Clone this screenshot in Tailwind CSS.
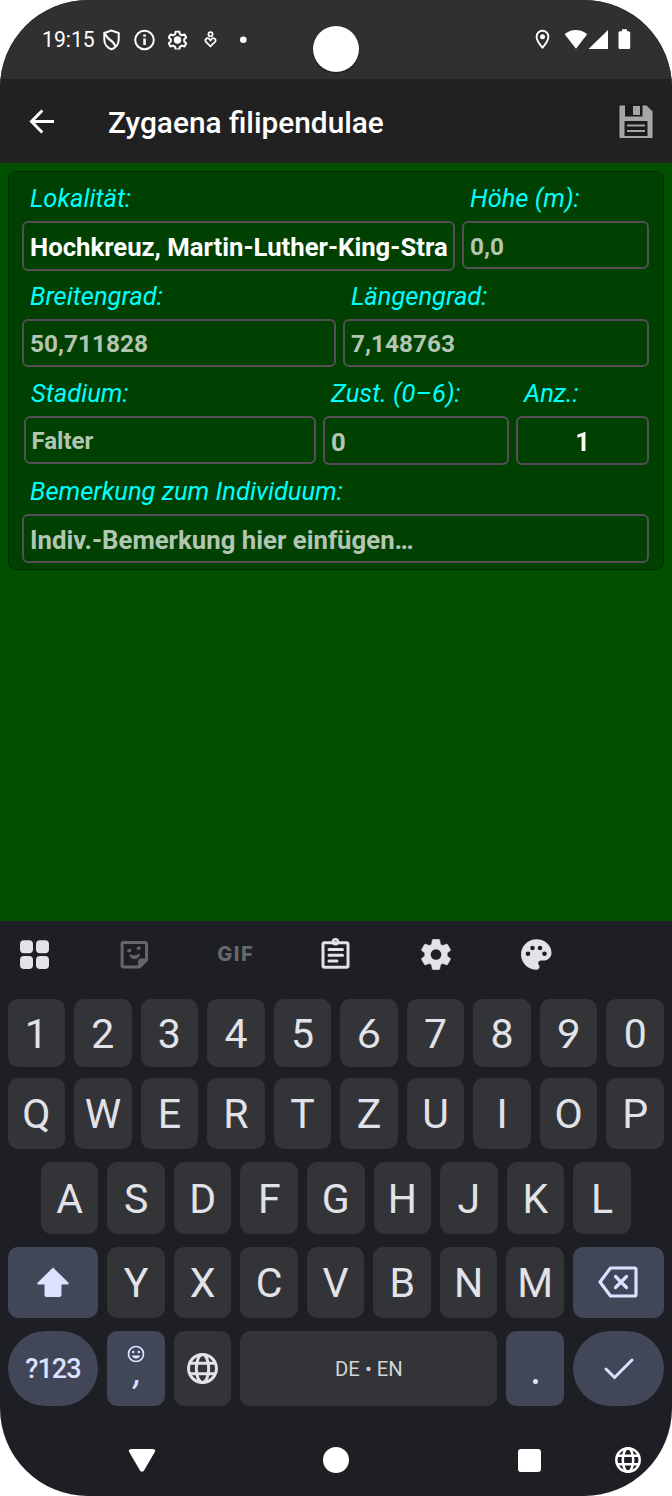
<!DOCTYPE html>
<html lang="de">
<head>
<meta charset="utf-8">
<title>Zygaena filipendulae</title>
<script src="https://cdn.jsdelivr.net/npm/@tailwindcss/browser@4"></script>
</head>
<body class="bg-white font-['Roboto',sans-serif]">
<svg width="0" height="0" class="absolute">
  <defs>
    <symbol id="gear" viewBox="2 2 20 20"><path d="M19.14 12.94c.04-.3.06-.61.06-.94 0-.32-.02-.64-.07-.94l2.03-1.58a.49.49 0 0 0 .12-.61l-1.92-3.32a.49.49 0 0 0-.59-.22l-2.39.96a7 7 0 0 0-1.62-.94l-.36-2.54a.48.48 0 0 0-.48-.41h-3.84a.48.48 0 0 0-.47.41l-.36 2.54c-.59.24-1.13.57-1.62.94l-2.39-.96a.48.48 0 0 0-.59.22L2.74 8.87a.47.47 0 0 0 .12.61l2.03 1.58c-.05.3-.09.63-.09.94s.02.64.07.94l-2.03 1.58a.49.49 0 0 0-.12.61l1.92 3.32c.12.22.37.29.59.22l2.39-.96c.5.38 1.03.7 1.62.94l.36 2.54c.05.24.24.41.48.41h3.84c.24 0 .44-.17.47-.41l.36-2.54a6.800 6.800 0 0 0 1.62-.94l2.39.96c.22.08.47 0 .59-.22l1.92-3.32a.47.47 0 0 0-.12-.61z"/></symbol>
    <symbol id="globe" viewBox="0 0 30 30"><g fill="none" stroke="currentColor" stroke-width="2.9"><circle cx="15" cy="15" r="13.500"/><ellipse cx="15" cy="15" rx="6" ry="13.500"/><path d="M2.500 10h25M2.500 20h25"/></g></symbol>
  </defs>
</svg>
<div class="relative w-[672px] h-[1496px] overflow-hidden rounded-[88px] bg-[#1e1f24] flex flex-col">

  <!-- status bar -->
  <div class="h-[79px] shrink-0 bg-[#303030] flex items-start pl-[42px] pr-[41px] text-white">
    <span class="w-[60px] mt-[27px] text-[21.200px] leading-[25px] whitespace-nowrap">19:15</span>
    <svg class="mt-[28px]" width="19" height="24" viewBox="0 0 19 24"><path d="M9.500 2.500 2.300 5v6.500c0 4.600 3 8.400 7.200 9.700 4.200-1.300 7.200-5.100 7.200-9.700V5z" fill="none" stroke="#fff" stroke-width="2"/><path d="M3.500 5.500c0 6 9.500 7 9.500 13" fill="none" stroke="#fff" stroke-width="2.200"/></svg>
    <svg class="mt-[28px] ml-[12px]" width="24" height="24" viewBox="0 0 24 24"><circle cx="11.500" cy="12" r="9.300" fill="none" stroke="#fff" stroke-width="2"/><path d="M10.300 6.500h2.500v2.300h-2.500zM10.300 10.500h2.500v6.500h-2.500z" fill="#fff"/></svg>
    <svg class="mt-[28px] ml-[8px]" width="25" height="24" viewBox="0 0 25 24"><svg x="3" y="2.500" width="19" height="19" viewBox="1.500 1.500 21 21" fill="none" stroke="#fff" stroke-width="2.200" stroke-linejoin="round"><path d="M10 2.500h4l.6 3 2.200 1.300 2.900-1 2 3.500-2.300 2v2.400l2.300 2-2 3.500-2.900-1-2.200 1.300-.6 3h-4l-.6-3-2.200-1.300-2.900 1-2-3.500 2.300-2v-2.400l-2.300-2 2-3.500 2.900 1 2.200-1.300z"/><circle cx="12" cy="12" r="3" fill="#fff"/></svg></svg>
    <svg class="mt-[28px] ml-[12px]" width="18" height="24" viewBox="0 0 18 24" fill="none" stroke="#fff" stroke-width="1.700"><circle cx="8.500" cy="6.200" r="2.100"/><path d="M8.500 18.300 4 13.900c-1.800-2 1-5 3-3.200l1.500 1.800L10 10.700c2-1.800 4.800 1.200 3 3.200z"/></svg>
    <svg class="mt-[28px] ml-[16px]" width="16" height="24" viewBox="0 0 16 24"><circle cx="7.300" cy="11.700" r="3.300" fill="#fff"/></svg>
    <span class="ml-[61px] mt-[26px] size-[46px] rounded-full bg-white shadow-[0_1px_2px_#0008]"></span>
    <svg class="mt-[28px] ml-auto" width="16" height="22" viewBox="0 0 16 22"><path d="M8.500 2.800a5.900 5.900 0 0 0-5.900 5.900c0 4.200 5.900 10.900 5.900 10.900s5.900-6.700 5.900-10.900a5.900 5.900 0 0 0-5.900-5.900z" fill="none" stroke="#fff" stroke-width="1.900"/><circle cx="8.500" cy="8.700" r="2.500" fill="#fff"/></svg>
    <svg class="mt-[28px] ml-[14px]" width="24" height="22" viewBox="0 0 24 22"><path d="M.7 6.200C6.500.500 17 .500 23.200 6.200L12 20.800z" fill="#fff"/></svg>
    <svg class="mt-[28px]" width="22" height="22" viewBox="0 0 22 22"><path d="M20 2v19H.5z" fill="#fff"/></svg>
    <svg class="mt-[28px] ml-[7px]" width="14" height="22" viewBox="0 0 14 22"><path d="M5 1.300h5V3.200h1.700q1.500 0 1.500 1.500v14.800q0 1.500-1.500 1.500h-8.700q-1.500 0-1.500-1.500V4.700q0-1.500 1.500-1.500h2z" fill="#fff"/></svg>
  </div>

  <!-- app bar -->
  <div class="h-[84px] shrink-0 bg-[#212121] flex items-center pl-[28px] pr-[18px] text-white">
    <svg width="28" height="28" viewBox="0 0 28 28"><path d="M26 14.500H4M14.300 3.500 3.500 14.500l10.800 11" fill="none" stroke="#fff" stroke-width="3"/></svg>
    <h1 class="ml-[52px] mt-[4px] text-[29.800px] font-medium leading-9 whitespace-nowrap">Zygaena filipendulae</h1>
    <svg class="ml-auto" width="36" height="36" viewBox="0 0 36 36"><path d="M2.500 2h26l6.500 6.500V35.500h-32.500q-1.500 0-1.500-1.500V3.500Q1 2 2.500 2z" fill="#a6a6a6" stroke="#111" stroke-width=".8"/><path d="M7 1.500h17.500V13.500h-17.500zM6.500 18h23v15h-23z" fill="#1b1b1b"/><path d="M15 3h7v9h-7z" fill="#a6a6a6"/><path d="M9 22.500h18M9 28h18" stroke="#a6a6a6" stroke-width="2"/></svg>
  </div>

  <!-- form -->
  <main class="h-[758px] shrink-0 bg-[#005000] px-2 pt-2">
    <section class="h-[399px] rounded-[7px] border border-[#002e00] bg-[#004000] pl-[13px] pr-[14px] pt-px text-[24.400px] font-bold text-[#b3c6b3]">
      <div class="flex gap-[7px] h-[98px]">
        <div class="w-[433px]">
          <div class="pl-2 h-12 leading-[50px] text-[25.500px] font-normal italic text-[#00ffff]">Lokalität:</div>
          <div class="h-[50px] rounded-[6px] border-2 border-[#554e56] pl-[6px] text-[25.700px] leading-[49px] whitespace-nowrap text-white">Hochkreuz, Martin-Luther-King-Stra</div>
        </div>
        <div class="flex-1">
          <div class="pl-2 h-12 leading-[50px] text-[25.500px] font-normal italic text-[#00ffff]">Höhe (m):</div>
          <div class="h-[48px] rounded-[6px] border-2 border-[#554e56] pl-[6px] leading-[47px]">0,0</div>
        </div>
      </div>
      <div class="flex gap-[7px] h-[97px]">
        <div class="w-[314px]">
          <div class="pl-2 h-12 leading-[50px] text-[25.500px] font-normal italic text-[#00ffff]">Breitengrad:</div>
          <div class="h-[48px] rounded-[6px] border-2 border-[#554e56] pl-[6px] leading-[46px]">50,711828</div>
        </div>
        <div class="flex-1">
          <div class="pl-2 h-12 leading-[50px] text-[25.500px] font-normal italic text-[#00ffff]">Längengrad:</div>
          <div class="h-[48px] rounded-[6px] border-2 border-[#554e56] pl-[6px] leading-[46px]">7,148763</div>
        </div>
      </div>
      <div class="flex gap-[7px] h-[98px] pl-[2px]">
        <div class="w-[292px]">
          <div class="pl-[7px] h-12 leading-[50px] text-[25.500px] font-normal italic text-[#00ffff]">Stadium:</div>
          <div class="h-[48px] rounded-[6px] border-2 border-[#554e56] pl-[5.500px] text-[24px] leading-[47px]">Falter</div>
        </div>
        <div class="w-[186px]">
          <div class="pl-2 h-12 leading-[50px] text-[25.600px] font-normal italic text-[#00ffff] whitespace-nowrap">Zust. (0–6):</div>
          <div class="h-[49px] rounded-[6px] border-2 border-[#554e56] pl-[6px] text-[25.700px] leading-[48px]">0</div>
        </div>
        <div class="flex-1">
          <div class="pl-2 h-12 leading-[50px] text-[25.500px] font-normal italic text-[#00ffff]">Anz.:</div>
          <div class="h-[49px] rounded-[6px] border-2 border-[#554e56] text-center text-[25.500px] leading-[48px] text-white">1</div>
        </div>
      </div>
      <div>
        <div class="pl-2 h-12 leading-[50px] text-[25.500px] font-normal italic text-[#00ffff]">Bemerkung zum Individuum:</div>
        <div class="h-[49px] rounded-[6px] border-2 border-[#554e56] pl-[6px] text-[25.750px] leading-[49px]">Indiv.-Bemerkung hier einfügen…</div>
      </div>
    </section>
  </main>

  <!-- keyboard tools -->
  <div class="h-[78px] shrink-0 flex items-start pt-[15px] pl-[16px] gap-[64.400px] text-[#e2e2e9]">
    <svg class="shrink-0" width="36" height="36" viewBox="0 0 36 36" fill="currentColor"><rect x="4" y="4.300" width="13" height="13" rx="4"/><rect x="20" y="4.300" width="13" height="13" rx="4"/><rect x="4" y="20" width="13" height="13" rx="4"/><rect x="20" y="20" width="13" height="13" rx="4"/></svg>
    <svg class="shrink-0" width="36" height="36" viewBox="0 0 36 36" fill="none" stroke="#66676b" stroke-width="3"><g transform="translate(.6)"><path d="M7 6.500h21q2 0 2 2V24l-7 7H7q-1.500 0-1.500-1.500V8q0-1.500 1.500-1.500z" stroke-linejoin="round"/><path d="M22 31v-6q0-2 2-2h6l-8 8z" fill="#66676b" stroke-width="1"/><path d="M13 19q5 2.500 10-.8-1 4.500-5 4.500-3.500 0-5-3.700z" fill="#66676b" stroke-width="1"/><path d="M11 15.500q1.500-1.500 3.500-.8M20.500 13q1.500-1.200 3.500-.8" stroke-width="3"/></g></svg>
    <span class="w-[36px] shrink-0 flex justify-center font-['Inter',sans-serif] text-[20px] font-extrabold tracking-[1.500px] leading-[37px] pl-[2px] text-[#66676b]">GIF</span>
    <svg class="shrink-0" width="36" height="36" viewBox="0 0 36 36" fill="none" stroke="currentColor" stroke-width="3"><rect x="6" y="6.800" width="25" height="24.500" rx="1.500"/><circle cx="18.500" cy="5.800" r="2.500" stroke-width="2.500"/><path d="M12 13.500h13.500M12 19.200h13.500M12 25h8" stroke-linecap="round"/></svg>
    <svg class="shrink-0" width="36" height="36" viewBox="0 0 36 36"><use href="#gear" x="2.500" y="3" width="31" height="31" fill="currentColor" stroke="currentColor" stroke-width=".5"/><circle cx="18" cy="18.500" r="5.300" fill="#1e1f24"/></svg>
    <svg class="shrink-0" width="36" height="36" viewBox="0 0 36 36"><path transform="translate(.5)" d="M18 3.200C9.500 3.200 2.500 10 2.500 18.500S9.500 33.700 18 33.700c1.800 0 3-1.400 3-3 0-.8-.3-1.300-.6-1.800-.7-.8-.7-1.200-.7-1.800 0-1.600 1.300-2.600 2.800-2.600H25c4.500 0 8-3.300 8-7.800 0-7.500-6.700-13.500-15-13.500z" fill="currentColor"/><g fill="#1e1f24"><circle cx="10" cy="17.800" r="2.300"/><circle cx="14.500" cy="12" r="2.300"/><circle cx="22" cy="12" r="2.300"/><circle cx="26.500" cy="17.800" r="2.300"/></g></svg>
  </div>

  <!-- keys -->
  <div class="shrink-0 pl-[7.500px] pr-[8px] text-[41px] text-[#e2e2e9] text-center">
    <div class="flex gap-[9px] h-[67.500px] leading-[70px] mb-[11.500px]">
      <span class="flex-1 rounded-[10px] bg-[#333438]">1</span><span class="flex-1 rounded-[10px] bg-[#333438]">2</span><span class="flex-1 rounded-[10px] bg-[#333438]">3</span><span class="flex-1 rounded-[10px] bg-[#333438]">4</span><span class="flex-1 rounded-[10px] bg-[#333438]">5</span><span class="flex-1 rounded-[10px] bg-[#333438] font-['Lato'] leading-[67px]">6</span><span class="flex-1 rounded-[10px] bg-[#333438]">7</span><span class="flex-1 rounded-[10px] bg-[#333438]">8</span><span class="flex-1 rounded-[10px] bg-[#333438] font-['Lato'] leading-[67px]">9</span><span class="flex-1 rounded-[10px] bg-[#333438]">0</span>
    </div>
    <div class="flex gap-[9px] h-[71px] leading-[73px] mb-[13px]">
      <span class="flex-1 rounded-[10px] bg-[#333438]">Q</span><span class="flex-1 rounded-[10px] bg-[#333438]">W</span><span class="flex-1 rounded-[10px] bg-[#333438]">E</span><span class="flex-1 rounded-[10px] bg-[#333438]">R</span><span class="flex-1 rounded-[10px] bg-[#333438]">T</span><span class="flex-1 rounded-[10px] bg-[#333438]">Z</span><span class="flex-1 rounded-[10px] bg-[#333438]">U</span><span class="flex-1 rounded-[10px] bg-[#333438]">I</span><span class="flex-1 rounded-[10px] bg-[#333438]">O</span><span class="flex-1 rounded-[10px] bg-[#333438]">P</span>
    </div>
    <div class="flex gap-[9px] h-[71.500px] leading-[74px] mb-[13px] px-[33.300px]">
      <span class="flex-1 rounded-[10px] bg-[#333438]">A</span><span class="flex-1 rounded-[10px] bg-[#333438]">S</span><span class="flex-1 rounded-[10px] bg-[#333438]">D</span><span class="flex-1 rounded-[10px] bg-[#333438]">F</span><span class="flex-1 rounded-[10px] bg-[#333438]">G</span><span class="flex-1 rounded-[10px] bg-[#333438]">H</span><span class="flex-1 rounded-[10px] bg-[#333438]">J</span><span class="flex-1 rounded-[10px] bg-[#333438]">K</span><span class="flex-1 rounded-[10px] bg-[#333438]">L</span>
    </div>
    <div class="flex gap-[9px] h-[71px] leading-[73px] mb-[13.500px]">
      <span class="w-[90.800px] rounded-[10px] bg-[#414659] text-[#dce1ff] flex items-center justify-center"><svg width="34" height="32" viewBox="0 0 34 32"><path d="M17 1.500 32.500 16.800q.8 1.700-1 1.700h-6V29q0 2-2 2h-13q-2 0-2-2V18.500h-6q-1.800 0-1-1.700z" fill="currentColor"/></svg></span>
      <span class="flex-1 rounded-[10px] bg-[#333438]">Y</span><span class="flex-1 rounded-[10px] bg-[#333438]">X</span><span class="flex-1 rounded-[10px] bg-[#333438]">C</span><span class="flex-1 rounded-[10px] bg-[#333438]">V</span><span class="flex-1 rounded-[10px] bg-[#333438]">B</span><span class="flex-1 rounded-[10px] bg-[#333438]">N</span><span class="flex-1 rounded-[10px] bg-[#333438]">M</span>
      <span class="w-[91px] rounded-[10px] bg-[#414659] text-[#dce1ff] flex items-center justify-center"><svg class="mr-[2px]" width="40" height="32" viewBox="0 0 40 32" fill="none" stroke="currentColor" stroke-width="3.200" stroke-linejoin="round" stroke-linecap="round"><path d="M12.500 2H36.500q1.500 0 1.500 1.500v25q0 1.500-1.500 1.500H12.500L2 16z"/><path d="m17.500 10.500 11 11m0-11-11 11"/></svg></span>
    </div>
    <div class="flex gap-[9px] h-[75px]">
      <span class="w-[90.800px] rounded-[38px] bg-[#414659] text-[#dce1ff] text-[27px] font-medium tracking-[-1px] leading-[76px]">?123</span>
      <span class="w-[57.600px] rounded-[10px] bg-[#414659] text-[#dce1ff] flex flex-col items-center pt-[14px]"><svg width="18" height="18" viewBox="0 0 18 18"><circle cx="9" cy="9" r="7.500" fill="none" stroke="currentColor" stroke-width="1.700"/><circle cx="6.200" cy="7" r="1.300" fill="currentColor"/><circle cx="11.800" cy="7" r="1.300" fill="currentColor"/><path d="M4.800 10.500h8.400q-1 3-4.200 3t-4.200-3z" fill="currentColor"/></svg><span class="mt-[-9px] ml-[3px] text-[36px] italic leading-[36px]">,</span></span>
      <span class="w-[57.600px] rounded-[10px] bg-[#333438] flex items-center justify-center"><svg width="31" height="31"><use href="#globe" width="31" height="31"/></svg></span>
      <span class="flex-1 rounded-[10px] bg-[#333438] text-[#d4d4da] text-[20.300px] leading-[76px]">DE • EN</span>
      <span class="w-[57.600px] rounded-[10px] bg-[#414659] flex justify-center pt-[48px]"><span class="size-[5px] rounded-full bg-[#dce1ff]"></span></span>
      <span class="w-[91px] rounded-[38px] bg-[#414659] text-[#dce1ff] flex items-center justify-center"><svg width="32" height="24" viewBox="0 0 32 24"><path d="m3 12 8.500 8.500L29 3" fill="none" stroke="currentColor" stroke-width="3" stroke-linecap="round"/></svg></span>
    </div>
  </div>

  <!-- navigation bar -->
  <div class="flex items-center pl-[128px] mt-[40px] text-white">
    <svg width="28" height="28" viewBox="0 0 28 28"><path d="M3.500 3h21q4 0 2 3.500L16 24.500q-2 2.700-4 0L1.500 6.500Q-.5 3 3.500 3z" fill="#fff"/></svg>
    <span class="ml-[166.500px] size-[26px] rounded-full bg-white"></span>
    <span class="ml-[169px] size-[23px] rounded-[3px] bg-white"></span>
    <svg class="ml-[74px]" width="26" height="26"><use href="#globe" width="26" height="26"/></svg>
  </div>
</div>
</body>
</html>
